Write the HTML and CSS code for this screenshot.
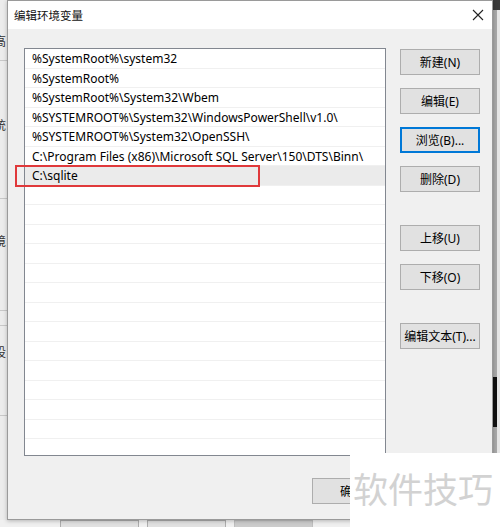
FILE: index.html
```html
<!DOCTYPE html>
<html lang="zh">
<head>
<meta charset="utf-8">
<title>编辑环境变量</title>
<link rel="stylesheet" href="styles.css">
</head>
<body>
<div class="desktop">
  <div class="bgwin">
    <div class="bg-left">
      <span class="bg-char c1">高</span>
      <span class="bg-line l1"></span>
      <span class="bg-char c2">统</span>
      <span class="bg-line l2"></span>
      <span class="bg-char c3">境</span>
      <span class="bg-line l3"></span>
      <span class="bg-line l4"></span>
      <span class="bg-char c4">设</span>
      <span class="bg-line l5"></span>
    </div>
    <div class="bg-right">
      <span class="bg-top"></span>
      <span class="bg-scroll"></span>
      <span class="bg-thumb"></span>
    </div>
    <div class="bg-buttons">
      <span class="bg-btn">确定</span>
      <span class="bg-btn">取消</span>
      <span class="bg-btn disabled">应用(A)</span>
      <span class="bg-text">Bro</span>
    </div>
  </div>

  <div class="dialog">
    <div class="titlebar">
      <span class="title">编辑环境变量</span>
      <svg class="close" width="12" height="12" viewBox="0 0 12 12"><path d="M1 1 L11 11 M11 1 L1 11" stroke="#222" stroke-width="1.1" fill="none"/></svg>
    </div>
    <div class="body">
      <div class="main">
        <div class="list">
          <div class="row">%SystemRoot%\system32</div>
          <div class="row">%SystemRoot%</div>
          <div class="row">%SystemRoot%\System32\Wbem</div>
          <div class="row">%SYSTEMROOT%\System32\WindowsPowerShell\v1.0\</div>
          <div class="row">%SYSTEMROOT%\System32\OpenSSH\</div>
          <div class="row">C:\Program Files (x86)\Microsoft SQL Server\150\DTS\Binn\</div>
          <div class="row selected">C:\sqlite</div>
          <div class="row"></div><div class="row"></div><div class="row"></div>
          <div class="row"></div><div class="row"></div><div class="row"></div>
          <div class="row"></div><div class="row"></div><div class="row"></div>
          <div class="row"></div><div class="row"></div><div class="row"></div>
          <div class="row"></div><div class="row"></div>
        </div>
        <div class="buttons">
          <button class="btn">新建(N)</button>
          <button class="btn g13">编辑(E)</button>
          <button class="btn g13 focused">浏览(B)...</button>
          <button class="btn g13">删除(D)</button>
          <button class="btn g33">上移(U)</button>
          <button class="btn g13">下移(O)</button>
          <button class="btn g33">编辑文本(T)...</button>
        </div>
      </div>
      <div class="footer">
        <button class="btn">确定</button>
        <button class="btn">取消</button>
      </div>
    </div>
    <div class="highlight"></div>
  </div>

  <div class="watermark">软件技巧</div>
</div>
</body>
</html>
```

FILE: styles.css
```css
* { box-sizing: border-box; }
html, body { margin: 0; padding: 0; }
body {
  width: 500px;
  height: 527px;
  overflow: hidden;
  font-family: "Noto Sans", "Noto Sans CJK SC", sans-serif;
  font-size: 12px;
  color: #000;
  background: #f0f0f0;
}
.desktop {
  position: relative;
  width: 500px;
  height: 527px;
  overflow: hidden;
}

/* background window */
.bgwin {
  position: relative;
  width: 500px;
  height: 527px;
  background: #f0f0f0;
}
.bg-left {
  position: absolute;
  left: 0; top: 0;
  width: 7px;
  height: 520px;
  overflow: hidden;
  background: #ececec;
}
.bg-char {
  position: absolute;
  left: -6px;
  font-family: "Noto Sans CJK SC", sans-serif;
  font-size: 12px;
  color: #333;
}
.c1 { top: 32px; }
.c2 { top: 116px; }
.c3 { top: 232px; }
.c4 { top: 343px; }
.bg-line {
  position: absolute;
  left: 0; width: 7px; height: 1px;
  background: #c8c8c8;
}
.l1 { top: 60px; }
.l2 { top: 198px; }
.l3 { top: 310px; }
.l4 { top: 325px; }
.l5 { top: 415px; }
.bg-right {
  position: absolute;
  left: 493px; top: 0;
  width: 7px; height: 527px;
  background: #e6e6e6;
}
.bg-top {
  position: absolute;
  left: 0; top: 0;
  width: 7px; height: 10px;
  background: #3a3a3a;
}
.bg-scroll {
  position: absolute;
  left: 0; top: 10px;
  width: 4px; height: 517px;
  background: #a8a8a8;
}
.bg-thumb {
  position: absolute;
  left: 0; top: 377px;
  width: 4px; height: 50px;
  background: #111;
}
.bg-buttons {
  position: absolute;
  left: 0; top: 520px;
  display: flex;
  gap: 8px;
  padding-left: 60px;
}
.bg-btn {
  width: 79px;
  height: 22px;
  border: 1px solid #adadad;
  background: #e1e1e1;
  text-align: center;
  line-height: 20px;
  padding-top: 5px;
  font-family: "Noto Sans CJK SC", sans-serif;
  font-size: 12px;
}
.bg-btn.disabled { background: #cccccc; color: #838383; border-color: #bfbfbf; }
.bg-text { padding-top: 5px; line-height: 20px; color: #555; font-size: 11px; }

/* dialog */
.dialog {
  position: absolute;
  left: 7px; top: 0;
  width: 486px;
  height: 520px;
  border: 1px solid #9a9a9a;
  background: #f0f0f0;
  display: flex;
  flex-direction: column;
  box-shadow: 0 1px 4px rgba(0,0,0,0.25);
}
.titlebar {
  height: 28px;
  background: #fff;
  display: flex;
  align-items: center;
  justify-content: space-between;
  padding: 0 8px 0 6px;
}
.title {
  font-family: "Noto Sans CJK SC", sans-serif;
  font-size: 11.5px;
  color: #111;
}
.close { display: block; }
.body {
  flex: 1;
  display: flex;
  flex-direction: column;
  padding: 19px 12px 0 16px;
}
.main {
  display: flex;
  gap: 14px;
}
.list {
  width: 362px;
  height: 408px;
  border: 1px solid #828790;
  background: #fff;
  overflow: hidden;
}
.row {
  height: 19.5px;
  border-bottom: 1px solid #f0f0f0;
  padding-left: 7px;
  line-height: 20px;
  white-space: nowrap;
  font-size: 12px;
}
.row.selected { background: #ebebeb; }
.buttons {
  display: flex;
  flex-direction: column;
  padding-top: 1px;
}
.btn {
  width: 80px;
  height: 26px;
  border: 1px solid #adadad;
  background: #e1e1e1;
  font-family: "Noto Sans", "Noto Sans CJK SC", sans-serif;
  font-size: 12px;
  color: #000;
  padding: 0;
  margin: 0;
}
.btn.g13 { margin-top: 13px; }
.btn.g33 { margin-top: 33px; }
.btn.focused { border: 2px solid #0078d7; }
.footer {
  display: flex;
  justify-content: flex-end;
  gap: 8px;
  padding-top: 22px;
}
.highlight {
  position: absolute;
  left: 7px; top: 164px;
  width: 245px; height: 22px;
  border: 2px solid #e0393b;
}

/* watermark overlay */
.watermark {
  position: absolute;
  left: 350px; top: 453px;
  width: 150px; height: 74px;
  background: #fff;
  padding: 17px 0 0 3px;
  font-family: "Noto Sans CJK SC", sans-serif;
  font-size: 35px;
  line-height: 35px;
  color: #d2d2d2;
  white-space: nowrap;
}
```
